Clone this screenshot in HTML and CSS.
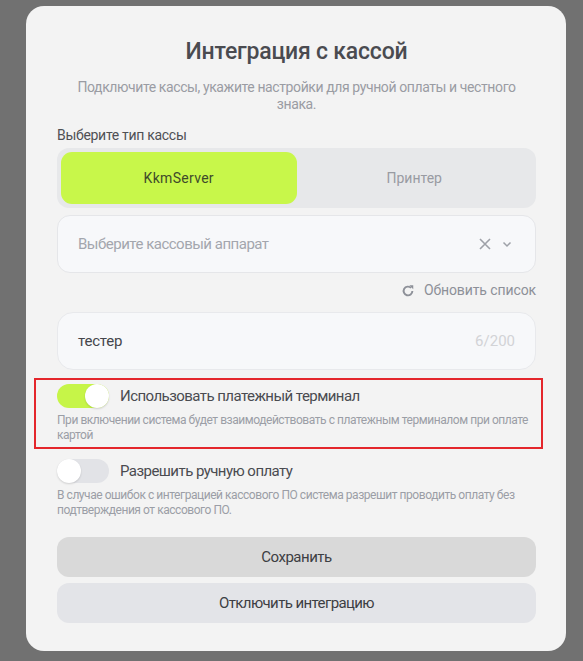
FILE: index.html
```html
<!DOCTYPE html>
<html lang="ru">

<head>
    <meta charset="UTF-8" />
    <meta name="viewport" content="width=device-width, initial-scale=1" />
    <title>Интеграция с кассой</title>
    <link rel="stylesheet" href="styles.css">
</head>

<body>

    <div class="modal">
        <h1 class="modal-title">Интеграция с кассой</h1>
        <p class="modal-subtitle">Подключите кассы, укажите настройки для ручной оплаты и честного знака.</p>

        <div class="field-label">Выберите тип кассы</div>
        <div class="segmented">
            <button class="segment active">KkmServer</button>
            <button class="segment">Принтер</button>
        </div>

        <div class="select">
            <span class="select-placeholder">Выберите кассовый аппарат</span>
            <span class="select-icons">
                <svg width="14" height="14" viewBox="0 0 14 14">
                    <path d="M2 2 L12 12 M12 2 L2 12" stroke="#9ea1a8" stroke-width="1.6" fill="none" />
                </svg>
                <svg width="12" height="12" viewBox="0 0 12 12">
                    <path d="M2.5 4.5 L6 8 L9.5 4.5" stroke="#9ea1a8" stroke-width="1.5" fill="none" />
                </svg>
            </span>
        </div>

        <div class="refresh">
            <svg width="14" height="14" viewBox="0 0 16 16">
                <path d="M13 8 A5 5 0 1 1 11.5 4.4" stroke="#8d9098" stroke-width="2.2" fill="none" />
                <path d="M9.5 1.5 L14 1.5 L14 6 Z" fill="#8d9098" />
            </svg>
            <span>Обновить список</span>
        </div>

        <div class="text-input">
            <span class="text-value">тестер</span>
            <span class="text-counter">6/200</span>
        </div>

        <div class="option highlighted">
            <div class="option-row">
                <span class="toggle on"><span class="knob"></span></span>
                <span class="option-label">Использовать платежный терминал</span>
            </div>
            <div class="option-hint">При включении система будет взаимодействовать с платежным терминалом при оплате картой</div>
        </div>

        <div class="option">
            <div class="option-row">
                <span class="toggle"><span class="knob"></span></span>
                <span class="option-label">Разрешить ручную оплату</span>
            </div>
            <div class="option-hint">В случае ошибок с интеграцией кассового ПО система разрешит проводить оплату без подтверждения от кассового ПО.</div>
        </div>

        <div class="actions">
            <button class="btn btn-save">Сохранить</button>
            <button class="btn btn-off">Отключить интеграцию</button>
        </div>
    </div>

</body>

</html>
```

FILE: styles.css
```css
html,
body {
    margin: 0;
    padding: 0;
    height: 100%;
    background-color: #717171;
    font-family: Roboto, "Noto Sans", sans-serif;
    overflow: hidden;
}

body {
    padding: 6px 17px 0 26px;
    box-sizing: border-box;
}

.modal {
    background: #f3f3f3;
    border-radius: 18px;
    height: 645px;
    box-sizing: border-box;
    padding: 32px 30px 0 31px;
}

.modal-title {
    margin: 0;
    text-align: center;
    font-size: 23px;
    font-weight: 500;
    color: #4a4b50;
    line-height: 28px;
    letter-spacing: -0.2px;
}

.modal-subtitle {
    margin: 13px 0 0;
    text-align: center;
    font-size: 14px;
    line-height: 17px;
    color: #9a9ca3;
    letter-spacing: -0.4px;
}

.field-label {
    margin-top: 14px;
    font-size: 14px;
    line-height: 17px;
    color: #4f5055;
    letter-spacing: -0.3px;
}

.segmented {
    margin-top: 4px;
    display: flex;
    padding: 4px;
    background: #e7e8ea;
    border-radius: 12px;
    height: 52px;
}

.segment {
    flex: 1;
    border: none;
    background: transparent;
    border-radius: 11px;
    font-family: inherit;
    font-size: 14px;
    color: #999ba2;
    cursor: pointer;
}

.segment.active {
    background: #c8f74a;
    color: #3f4a2a;
    letter-spacing: 0.3px;
}

.select {
    margin-top: 7px;
    height: 58px;
    box-sizing: border-box;
    border: 1px solid #e5e6e9;
    border-radius: 13px;
    background: #f7f8fa;
    display: flex;
    align-items: center;
    justify-content: space-between;
    padding: 0 22px 0 20px;
}

.select-placeholder {
    font-size: 15px;
    color: #a3a6ad;
    letter-spacing: -0.5px;
}

.select-icons {
    display: flex;
    align-items: center;
    gap: 9px;
}

.select-icons svg {
    display: block;
}

.refresh {
    margin-top: 9px;
    display: flex;
    justify-content: flex-end;
    align-items: center;
    gap: 9px;
    font-size: 14px;
    color: #8d9098;
    line-height: 17px;
    letter-spacing: -0.1px;
}

.text-input {
    margin-top: 13px;
    height: 58px;
    box-sizing: border-box;
    border: 1px solid #e8e9ec;
    border-radius: 16px;
    background: #f7f8fa;
    display: flex;
    align-items: center;
    justify-content: space-between;
    padding: 0 20px 0 20px;
}

.text-value {
    font-size: 15px;
    color: #45464b;
    letter-spacing: -0.2px;
}

.text-counter {
    font-size: 15px;
    color: #d2d3d6;
}

.option {
    margin: 10px 0 0;
}

.option.highlighted {
    border: 2px solid #e4262b;
    margin: 8px -7px 0 -23px;
    padding: 4px 5px 4px 21px;
}

.option-row {
    display: flex;
    align-items: center;
    gap: 11px;
}

.toggle {
    width: 52px;
    height: 24px;
    border-radius: 12px;
    background: #e2e3e7;
    position: relative;
    flex-shrink: 0;
}

.toggle.on {
    background: #c6f548;
}

.knob {
    position: absolute;
    top: 0;
    left: 0;
    width: 24px;
    height: 24px;
    border-radius: 50%;
    background: #ffffff;
    box-shadow: 0 1px 2px rgba(0, 0, 0, 0.15);
}

.toggle.on .knob {
    left: 28px;
}

.option-label {
    font-size: 15px;
    color: #4a4b50;
    letter-spacing: -0.55px;
}

.option-hint {
    margin-top: 5px;
    font-size: 12px;
    line-height: 15px;
    color: #9b9ea6;
    letter-spacing: -0.45px;
}

.actions {
    margin-top: 19px;
    display: flex;
    flex-direction: column;
    gap: 6px;
}

.btn {
    height: 40px;
    border: none;
    border-radius: 12px;
    font-family: inherit;
    font-size: 15px;
    color: #3d3e43;
    cursor: pointer;
}

.btn-save {
    background: #d9d9d9;
    letter-spacing: -0.5px;
}

.btn-off {
    background: #e3e4e8;
    letter-spacing: -0.6px;
}
```
